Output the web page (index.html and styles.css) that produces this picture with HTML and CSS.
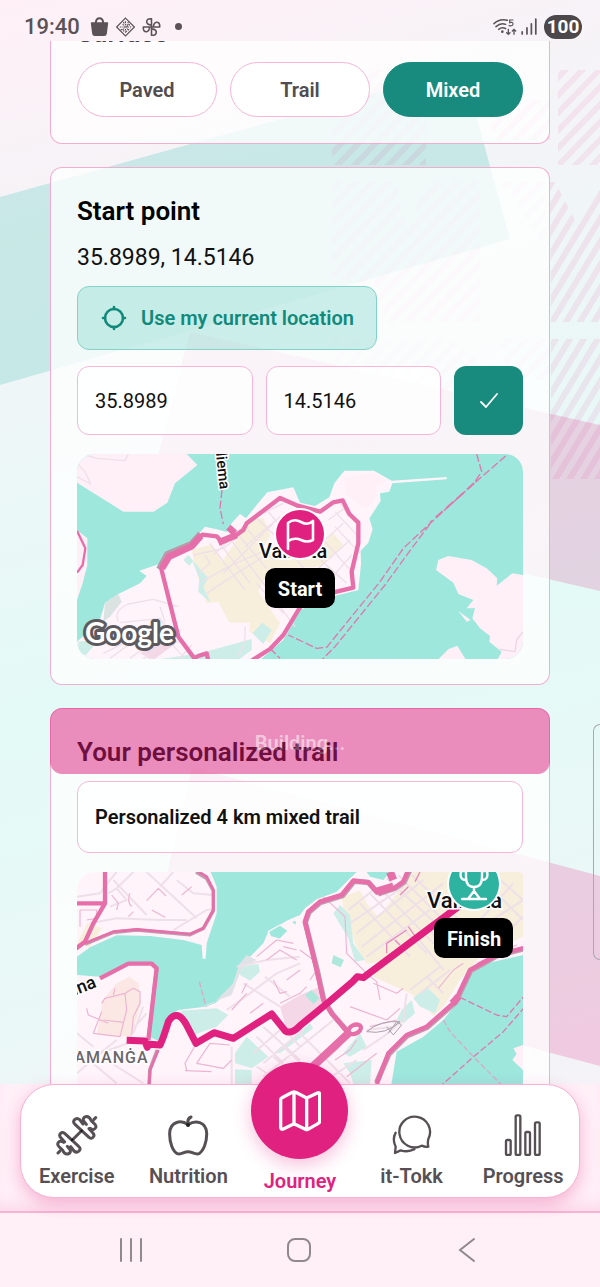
FILE: index.html
```html
<!DOCTYPE html>
<html lang="en">
<head>
<meta charset="utf-8">
<meta name="viewport" content="width=device-width, initial-scale=1">
<title>Journey</title>
<link rel="stylesheet" href="styles.css">
</head>
<body>
<div class="screen">
  <svg class="backdrop" viewBox="0 0 600 1287" preserveAspectRatio="none" aria-hidden="true">
    <defs>
      <pattern id="diag" width="17" height="17" patternUnits="userSpaceOnUse" patternTransform="skewX(-44)"><rect width="8" height="17" fill="#e0218a"/></pattern>
      <pattern id="steep" width="14" height="17" patternUnits="userSpaceOnUse" patternTransform="skewX(-31)"><rect width="7" height="17" fill="#e0218a"/></pattern>
    </defs>
    <path d="M0 197 463 68 510 239 0 385Z" fill="#9fdcd6" fill-opacity=".52"/>
    <path d="M190 332 600 425V591L150 487Z" fill="#e388b7" fill-opacity=".34"/>
    <path d="M192 767 600 876V1066L150 946Z" fill="#ea86b8" fill-opacity=".37"/>
    <g fill="url(#diag)" fill-opacity=".08">
      <path d="M332 70H426V165H332ZM492 100H550V140H492ZM558 70H600V165H558ZM332 182H395L408 232 425 182H480V322H385L375 285 332 278Z"/>
      <path d="M332 339H450L480 362V400H332ZM332 440H376V450H332ZM500 182H545V250L515 200ZM498 339H550V380H510Z" fill-opacity=".06"/>
    </g>
    <path d="M550 182H555L576 222 600 182V322H551ZM551 339H600V479H551Z" fill="url(#steep)" fill-opacity=".09"/>
  </svg>

  <header class="status">
    <time class="clock">19:40</time>
    <svg class="glyph" viewBox="0 0 54 60" aria-hidden="true"><path d="M3 16H13Q15 1 27 1T41 16H51Q53 16 53 19L49 50Q48 57 41 57H13Q6 57 5 50L1 19Q1 16 3 16ZM19 16H35Q34 7 27 7T19 16Z" fill="#5a5256" fill-rule="evenodd"/></svg>
    <svg class="glyph" viewBox="0 0 60 60" aria-hidden="true"><g fill="none" stroke="#5a5256" stroke-width="3.5"><path d="M30 2 58 30 30 58 2 30Z"/><path d="M30 12v12M30 36v12M12 30h12M36 30h12M21 21l8 8M39 21l-8 8M21 39l8-8M39 39l-8-8M23 15l14 14M15 37l14 8M37 14l8 14M31 45l14-10" stroke-dasharray="5 3"/></g></svg>
    <svg class="glyph" viewBox="0 0 60 60" aria-hidden="true"><g fill="none" stroke="#5a5256" stroke-width="5" stroke-linejoin="round"><path id="petal" d="M30 30V4Q14 3 15 15 17 23 30 24"/><use href="#petal" transform="rotate(90 30 30)"/><use href="#petal" transform="rotate(180 30 30)"/><use href="#petal" transform="rotate(270 30 30)"/></g></svg>
    <span class="dot"></span>
    <span class="spacer"></span>
    <svg class="wifi" viewBox="0 0 72 54" aria-hidden="true"><g fill="none" stroke="#5a5256" stroke-width="4.5" stroke-linecap="round"><path d="M3 17Q20 1 43 7M9 26Q23 13 38 19M17 34Q27 25 38 32"/><path d="M46 34V49M41 44l5 5 5-5M63 49V34M58 39l5-5 5 5" stroke-width="4"/><path d="M60 6H50V14Q60 11 60 18T48 23" stroke-width="3.5"/></g><circle cx="28" cy="41" r="4" fill="#5a5256"/></svg>
    <svg class="bars" viewBox="0 0 46 50" aria-hidden="true"><path d="M3 41V47M17 29V47M30 17V47M43 3V47" stroke="#5a5256" stroke-width="5" stroke-linecap="round"/></svg>
    <span class="battery">100</span>
  </header>

  <main class="scroll">
    <section class="card surface">
      <h2>Surface</h2>
      <div class="pills">
        <button class="pill">Paved</button>
        <button class="pill">Trail</button>
        <button class="pill selected" aria-pressed="true">Mixed</button>
      </div>
    </section>

    <section class="card">
      <h2>Start point</h2>
      <p class="coords">35.8989, 14.5146</p>
      <button class="locate">
        <svg viewBox="0 0 26 26" aria-hidden="true"><g fill="none" stroke="#128a7b" stroke-width="2.6" stroke-linecap="round"><circle cx="13" cy="13" r="9"/><path d="M13 2V4M13 22V24M2 13H4M22 13H24"/></g></svg>
        Use my current location
      </button>
      <form class="fields" onsubmit="return false">
        <input type="text" aria-label="Latitude" value="35.8989">
        <input type="text" aria-label="Longitude" value="14.5146">
        <button class="confirm" aria-label="Set start point"><svg viewBox="0 0 20 18" aria-hidden="true"><path d="M2 10 7 15 18 2" fill="none" stroke="#fff" stroke-width="1.8" stroke-linecap="round" stroke-linejoin="round"/></svg></button>
      </form>

      <svg class="map map-start" viewBox="0 0 446 205" preserveAspectRatio="xMidYMid slice" role="img" aria-label="Map of the start point">
        <rect width="446" height="205" fill="#9de7dd"/>
        <g transform="scale(.33333) translate(-81 -42)" stroke-linejoin="round">
          <g fill="#fff0f7">
            <path d="M81 42H410L442 75 375 130 352 188 311 215H220L81 128Z"/>
            <path d="M81 270 112 295V375L98 430 81 480Z"/>
            <path d="M81 660V605L148 545 165 488 205 462 240 445 270 430 290 408 268 392 328 372 350 335 425 305 465 260 500 268 530 276 545 250 570 222 588 235 620 195 652 157 730 142 750 188 795 198 838 172 853 130 883 92H972L1025 122 1190 111V118L1027 130 1018 155 990 160 992 183 958 235 968 268 955 308 932 332 933 372 925 450 855 468 750 510 700 600 630 660Z" fill="#fff4fa"/>
            <path d="M1158 390 1165 360 1195 348 1265 360 1310 385 1342 415 1340 437 1387 400 1419 405V660H1342L1355 635 1318 605 1320 588 1290 565 1267 535 1275 505H1250L1270 480 1225 462 1210 428ZM1225 513 1262 540 1250 545ZM1163 660 1195 628 1222 617 1248 660Z"/>
            <path d="M885 115 972 98 1010 122 980 140 975 175 948 205 890 165Z"/>
          </g>
          <path d="M425 330 485 312 515 365 560 300 600 240 640 233 662 285 640 320 700 360 790 345 850 280 880 315 810 380 660 385 625 455 690 550 660 610 598 575 600 548 538 548 505 485 470 490 440 400Z" fill="#f7efdc"/>
          <g fill="#cdeee8"><path d="M400 360 415 345 430 362 418 378ZM425 358 475 415 460 440 482 488 445 455 448 415ZM607 580 637 548 665 570 640 612ZM310 660 450 640 605 597V630L565 660ZM85 605 148 598 108 645 85 640Z"/></g>
          <path d="M270 640 325 610 375 612 310 660Z" fill="#f4d8e8"/>
          <path d="M160 545 165 488 205 462 215 485 180 530Z" fill="#dbe2e2"/>
          <g fill="none" stroke="#efdfe9" stroke-width="4">
            <path d="M81 70 105 95 122 132 81 110M95 42 140 55 225 62 235 42"/>
            <path d="M205 545Q190 510 235 492L310 478 385 500M210 548 330 535 375 600M180 655 270 590 410 610M240 655 370 560M275 660 395 570M205 560 250 600 300 660M330 500 345 545M160 640 240 600M345 590 400 650M385 660 425 615"/>
            <path d="M430 345 520 325 560 295M445 400 480 370 465 345M455 425 545 375 650 330M480 310 520 365 585 450M510 310 600 430M540 295 620 405 680 480M565 285 650 385M590 265 670 360M620 235 700 310 790 420M650 210 720 290M520 400 590 330 670 250M470 460 560 400 640 350M585 320 690 230M490 345 600 240 700 190M620 430 700 520M690 500 735 560M560 650Q590 620 585 560M855 260 930 340M820 300 910 400M790 340 890 430M800 390 900 300M830 430 905 345M770 350 880 250M835 240 890 200M870 190 895 225M855 215 925 290"/>
          </g>
          <path d="M81 272 106 325 98 375 81 398" fill="none" stroke="#e66faa" stroke-width="7"/>
          <path d="M328 388 352 343 425 312 452 282" fill="none" stroke="#b99aa9" stroke-width="20"/>
          <path d="M475 662 470 640 445 648 433 655 385 590 334 387 356 347 425 319 457 284 500 289 515 305 550 292 580 270 590 250 690 174 740 196 810 215 850 187 878 181 898 222 925 248V310L905 395 910 443 850 457 770 475 745 510 700 585 660 627 605 662" fill="none" stroke="#e66faa" stroke-width="13"/>
          <path d="M336 385 357 350 425 319 452 288M505 308 560 285M535 262 555 280" fill="none" stroke="#e66faa" stroke-width="20"/>
          <g fill="none" stroke="#df78ac" stroke-width="4" stroke-dasharray="24 8">
            <path d="M516 150 510 205 520 252M1367 48 1270 132 1160 232 1060 325 990 425 830 622 800 625 715 585M1280 42 1295 95 1270 132M1140 252 1085 325 1005 435 855 620 815 660M660 625 690 655"/>
          </g>
          <path d="M1272 130 1140 248" fill="none" stroke="#df78ac" stroke-width="6" stroke-dasharray="28 14"/>
          <path d="M1419 575 1400 600 1395 635 1350 628" fill="none" stroke="#ecd5e3" stroke-width="4"/>
        </g>
        <text class="map-label" font-size="15" transform="translate(138 -10) rotate(84)">Sliema</text>
        <text class="map-label" x="182" y="104" font-size="20">Valletta</text>
        <text class="google" x="8" y="189" font-size="28">Google</text>
        <circle cx="223" cy="80" r="26" fill="#fff"/><circle cx="223" cy="80" r="24" fill="#e0217f"/>
        <path d="M211 95V69Q217 64 224 68T236 67V86Q230 89 224 86T211 87" fill="none" stroke="#fff" stroke-width="2.6" stroke-linecap="round" stroke-linejoin="round"/>
        <rect x="188" y="114" width="70" height="40" rx="10"/>
        <text class="pin-label" x="223" y="142" font-size="20">Start</text>
      </svg>
    </section>

    <section class="card trail">
      <button class="build" disabled>Building...</button>
      <h2>Your personalized trail</h2>
      <p class="summary">Personalized 4 km mixed trail</p>
      <svg class="map map-trail" viewBox="0 0 446 240" preserveAspectRatio="xMidYMin slice" role="img" aria-label="Map of the personalized trail">
        <rect width="446" height="240" fill="#fff4fa"/>
        <g transform="scale(.33333) translate(-81 -36)" stroke-linejoin="round">
          <path d="M482 36H920L895 60 860 95 800 118 765 145 750 165 710 182 655 215 640 250 600 290 570 310 550 370 520 410 495 430 465 440 385 450 355 470 330 545 298 530 320 330 300 310H235L150 350 81 345V290L120 262 200 226 300 228 400 240 455 255 458 296H467L470 250 500 160V80ZM950 36H1020L1000 60 960 50ZM1419 285 1310 310 1250 350 1220 430 1180 480 1120 530 1040 575 1010 760H1419Z" fill="#9de7dd"/>
          <path d="M655 215 690 195 715 212 690 238 662 230ZM722 185 740 180 738 198Z" fill="#9de7dd" stroke="#fff4fa" stroke-width="4"/>
          <path d="M1419 555 1390 565 1400 582 1387 600 1419 630Z" fill="#fff0f7"/>
          <path d="M875 112 930 92 950 130 985 172 1090 36H1419V230L1290 290 1230 360 1180 440 1150 468 1120 430 1080 400 970 350 990 305 950 312 915 250 900 200 880 150ZM81 252 112 188 155 205 120 262Z" fill="#f7efdc"/>
          <path d="M140 525 158 420 200 370 238 350 265 370 273 430 245 530Z" fill="#fbe8e4"/>
          <path d="M690 440 750 405 810 380 830 430 750 490 710 510Z" fill="#f4d8e8"/>
          <g fill="#cdeee8"><path d="M390 452 500 445 535 465 500 500 430 525 415 490ZM565 320 625 312 630 335 600 362 570 345ZM555 580 590 530 655 590 605 625 555 610ZM555 628 605 630V672H555ZM675 575 780 490 790 505 690 580ZM850 160 870 135 900 165 910 250 945 300 915 305 895 235ZM1090 415 1130 380 1170 420 1155 460 1110 440ZM1055 450 1085 420 1095 460 1060 490 1040 480ZM880 610 965 600 960 672H910L900 640ZM880 580 930 520 950 560 900 590Z"/></g>
          <path d="M850 285 882 300 872 322 845 310ZM765 405 785 390 808 415 790 432Z" fill="#aee8dc"/>
          <path d="M440 445 490 430 550 370 570 310 590 285 620 300 575 325 545 405Z" fill="#dfe2e6"/>
          <g fill="none" stroke="#efdfe9" stroke-width="6">
            <path d="M81 110 150 100 180 60 200 36M175 100 200 85 250 36M190 60 290 165M200 85 230 120 180 140M290 36 440 175M330 80 370 36M120 190 200 175 330 180 410 180M370 210 470 150 490 148M380 60 430 100 490 105M560 320 650 300 750 290M530 450 600 400 680 340 750 310M580 370 690 440M645 350 720 410M660 460 750 560M620 530 700 610M640 500 750 600M610 580 690 510M640 610 760 510M81 570 200 670M81 640 150 580 260 540M150 580 200 540M170 600 280 670M81 520 130 560M255 500 290 460M250 520 280 440M545 560V672M620 620 700 672M670 590 780 680M700 560 830 680M750 520 900 670M640 650 850 480M740 670 870 560M800 680 920 600"/>
            <path d="M930 130 1080 290M960 100 1130 280M985 80 1160 260M1010 55 1190 220M1045 45 1220 220M1085 45 1250 200M900 190 1060 80M920 220 1120 60M935 260 1180 70M950 290 1220 90M895 150 970 90M1100 230 1180 330M1140 210 1200 290M1180 180 1250 280M1290 50 1419 180M1340 50 1419 120M1250 230 1419 120M1080 390 1170 320M1110 400 1200 330M1130 350 1180 400M1350 240 1419 170M1290 180 1390 70M1070 400 1060 480 1030 500 950 510M940 570 1000 530 1060 480"/>
          </g>
          <g fill="none" stroke="#edb5d2" stroke-width="3.5">
            <path d="M185 105 205 130 200 150M240 100Q230 125 245 140M290 122 325 85 348 108M395 105 425 80M305 150 345 172M235 170 250 155M90 150H140V175L110 180M90 150V200M155 430 165 415 225 400 250 385 270 395V430L250 470 245 525M225 400 230 450 210 530 130 520 155 455M160 480 220 487M190 405 195 385M110 445 115 465 175 490M620 290 680 240 730 250M650 300 690 270 740 300M700 260 740 270M575 400 590 370M670 360 690 400 710 395M600 460 640 430M690 430 750 400 770 380M710 360 750 330M545 450 590 400M410 630 405 610 445 540M440 610 520 625 545 600M440 610 480 550 540 555M405 632 485 635M750 270 790 300M780 360 800 330"/>
            <path d="M820 110 885 170 890 280 950 340 980 365 990 420M970 370 1040 400 1060 385M1165 385 1210 330 1240 310M1050 445 1010 480 900 440M855 600 900 570 920 540M1280 310 1400 255M890 650 980 580M960 500 1040 480"/>
          </g>
          <path d="M1110 36 1095 65M1075 80 1050 105M1010 280V250L1070 210M1075 200 1100 235 1090 245M1035 240 1050 255M1250 100 1230 80" fill="none" stroke="#e88abb" stroke-width="4"/>
          <path d="M950 515Q990 480 1050 485 1010 525 950 515M1010 500 1030 525 1055 495 1040 485 1015 520" fill="none" stroke="#a9a1ae" stroke-width="3"/>
          <g fill="none" stroke="#bf9eb0" stroke-width="11">
            <path d="M105 252 190 217 260 210 420 224 460 205 490 152V92L470 55 438 36M320 325 295 540M322 570 300 628 297 680"/>
            <path d="M1080 30 1062 67 1035 85 985 102M985 100 955 67 912 64 878 107 812 127 777 157 766 187 802 332 822 422 847 462 900 522M1419 267 1342 287 1262 332 1217 427 1132 502 1072 527 1017 582 980 667" stroke-width="16"/>
          </g>
          <g fill="none" stroke="#e66faa">
            <path d="M165 30V130L130 190 105 245 75 268M75 130H165M150 355 235 311H305L320 325 295 540M980 672 1015 580 1070 525 1130 500 1215 425 1260 330 1340 285 1425 263" stroke-width="13"/>
            <path d="M105 250 190 215 260 208 420 222 460 205 490 150V90L470 50 438 30M325 570 300 630 297 680" stroke-width="8"/>
            <path d="M1075 30 1060 65 1035 83 980 96 955 67 910 62 875 105 810 125 775 155 765 185 800 330 820 420 845 460 895 520" stroke-width="14"/>
            <path d="M980 95 1030 80M1030 60 1020 36M750 655 895 520" stroke-width="24"/>
            <ellipse cx="914" cy="508" rx="20" ry="13" stroke-width="13" transform="rotate(-25 914 508)"/>
            <path d="M1207 430 1225 410" stroke-width="22"/>
          </g>
          <path d="M1230 412 1340 465 1370 470 1425 405M1425 440 1360 515 1265 595 1170 680" fill="none" stroke="#df78ac" stroke-width="4" stroke-dasharray="20 8"/>
          <path d="M1180 480 1200 515 1270 590 1360 680M448 365 468 440" fill="none" stroke="#dba9c6" stroke-width="4" stroke-dasharray="18 7"/>
          <path d="M230 541 285 543 292 562 290 552 330 555Q338 540 355 485 380 445 408 492L438 550 492 518 550 535 665 462 705 512Q722 525 750 497L835 427 908 365 922 350 940 353 1225 140 1280 90" fill="none" stroke="#e0217f" stroke-width="21"/>
        </g>
        <text class="map-label" font-size="18" transform="translate(-32 135) rotate(-21)">Marina</text>
        <text class="map-label district" x="-15" y="191" font-size="16">ĦAMANĠA</text>
        <text class="map-label" x="350" y="36" font-size="22">Valletta</text>
        <circle cx="397" cy="12" r="27" fill="#fff"/><circle cx="397" cy="12" r="25" fill="#2db3a0"/>
        <path d="M389 -8H405V5Q405 15 397 15T389 5ZM389 -1H384Q382 8 389 8M405 -1H410Q412 8 405 8M397 15V19L391 27M397 19 403 27M385 27H409" fill="none" stroke="#fff" stroke-width="2.4" stroke-linecap="round" stroke-linejoin="round"/>
        <rect x="357" y="46" width="79" height="40" rx="10"/>
        <text class="pin-label" x="397" y="74" font-size="20">Finish</text>
      </svg>
    </section>
  </main>

  <nav class="dock" aria-label="Main">
    <div class="tabs">
      <a class="tab" href="#exercise">
        <svg viewBox="166 188 126 126" aria-hidden="true"><g fill="none" stroke="#565054" stroke-width="9" stroke-linecap="round" stroke-linejoin="round"><path id="plate" d="M247 218 237 205Q229 198 222 205T223 219L265 258Q273 264 278 257T275 243L265 232M268 231Q280 239 285 229 288 222 280 216L271 207Q266 194 255 196 245 200 249 209L257 219M280 204 285 199"/><use href="#plate" transform="rotate(180 228.5 252)"/><path d="M215 266 242 239"/></g><path d="M243 234l4 4-5 5-4-4ZM215 261l4 4-5 5-4-4Z" fill="#111"/></svg>
        <span>Exercise</span>
      </a>
      <a class="tab" href="#nutrition">
        <svg viewBox="502 188 126 126" aria-hidden="true"><path d="M565 220C545 205 512 209 510 245 509 275 520 300 533 307 545 311 552 301 565 301S586 311 598 307C612 298 622 272 621 245 619 210 587 205 565 220C563 208 566 200 574 197" fill="none" stroke="#565054" stroke-width="9" stroke-linecap="round" stroke-linejoin="round"/><circle cx="565" cy="221" r="6" fill="#222"/></svg>
        <span>Nutrition</span>
      </a>
      <a class="tab active" href="#journey" aria-current="page">
        <span class="bubble"><svg viewBox="837 118 126 126" aria-hidden="true"><path d="M842 147Q842 143 846 141L877 125Q882 122 887 125L920 142 952 127Q959 124 959 132V211Q959 216 955 218L924 236Q920 238 916 236L882 219 850 235Q842 238 842 229ZM882 125V219M920 142V236" fill="none" stroke="#fff" stroke-width="10" stroke-linejoin="round"/></svg></span>
        <span>Journey</span>
      </a>
      <a class="tab" href="#tokk">
        <svg viewBox="274 188 126 126" aria-hidden="true"><path d="M386 263A46 46 0 1 0 366 283Q377 288 386 286 383 277 386 263M288 244Q277 264 288 286L286 305 303 297Q325 304 344 294" fill="none" stroke="#565054" stroke-width="7" stroke-linecap="round" stroke-linejoin="round"/></svg>
        <span>it-Tokk</span>
      </a>
      <a class="tab" href="#progress">
        <svg viewBox="608 188 126 126" aria-hidden="true"><g fill="none" stroke="#565054" stroke-width="7"><rect x="620" y="266" width="14" height="45" rx="4"/><rect x="649" y="192" width="14" height="119" rx="4"/><rect x="678" y="242" width="14" height="69" rx="4"/><rect x="707" y="213" width="14" height="98" rx="4"/></g></svg>
        <span>Progress</span>
      </a>
    </div>
  </nav>

  <footer class="system">
    <button aria-label="Recent apps"><svg viewBox="0 0 28 28" aria-hidden="true"><path d="M4 3V25M14 3V25M24 3V25"/></svg></button>
    <button aria-label="Home"><svg viewBox="0 0 28 28" aria-hidden="true"><rect x="3" y="3" width="22" height="22" rx="7"/></svg></button>
    <button aria-label="Back"><svg viewBox="0 0 28 28" aria-hidden="true"><path d="M21 3 7 14 21 25"/></svg></button>
  </footer>
  <div class="edge-handle"></div>
</div>
</body>
</html>
```
FILE: styles.css
```css
* { box-sizing: border-box; }

body {
  margin: 0;
  font-family: Roboto, "Noto Sans", sans-serif;
  color: #111;
}

button, input {
  font: inherit;
  color: inherit;
  margin: 0;
}

h2, p { margin: 0; }

.screen {
  position: relative;
  isolation: isolate;
  display: flex;
  flex-direction: column;
  height: 100vh;
  overflow: hidden;
  background: linear-gradient(165deg, #fff0f7 0%, #f4f4f7 17%, #e3faf7 50%, #e9f8f7 70%, #f8f1f7 90%);
}

.backdrop {
  position: absolute;
  inset: 0;
  z-index: -1;
  width: 100%;
  height: 100%;
}

/* Status bar */
.status {
  flex: none;
  display: flex;
  align-items: center;
  gap: 7px;
  height: 41px;
  padding: 12px 18px 0 24px;
  color: #5a5256;
}

.clock {
  font-size: 22px;
  font-weight: 500;
  margin-right: 3px;
}

.glyph {
  width: 19px;
  height: 20px;
}

.dot {
  width: 7px;
  height: 7px;
  margin-left: 7px;
  border-radius: 50%;
  background: #5a5256;
}

.spacer { flex: 1; }

.wifi {
  width: 24px;
  height: 18px;
  margin-right: -3px;
}

.bars {
  width: 16px;
  height: 17px;
}

.battery {
  width: 38px;
  border-radius: 12px;
  background: #4b474b;
  color: #fff;
  font-size: 19px;
  font-weight: 700;
  line-height: 24px;
  text-align: center;
}

/* Scrolling content */
.scroll {
  flex: 1;
  min-height: 0;
  overflow: hidden;
  display: flex;
  flex-direction: column;
  gap: 23px;
  padding: 0 50px;
}

.card {
  position: relative;
  flex: none;
  padding: 26px 26px 25px;
  border: 1px solid rgba(240, 140, 188, 0.7);
  border-radius: 12px;
  background: rgba(255, 255, 255, 0.76);
}

.card h2 {
  font-size: 26px;
  font-weight: 600;
  line-height: 35px;
  color: #000;
}

/* Scrolled so that only the foot of the card is in view */
.surface {
  margin-top: -52px;
  padding-bottom: 26px;
}

.surface h2 { color: #444; }

.pills {
  display: flex;
  gap: 13px;
  margin-top: 11px;
}

.pill {
  flex: 1;
  height: 55px;
  border: 1px solid #f7b6d6;
  border-radius: 28px;
  background: #fff;
  color: #514c50;
  font-size: 20px;
  font-weight: 600;
}

.pill.selected {
  border-color: #188b7e;
  background: #188b7e;
  color: #fff;
}

.coords {
  margin-top: 13px;
  font-size: 23px;
  line-height: 31px;
}

.locate {
  display: flex;
  align-items: center;
  gap: 14px;
  height: 64px;
  margin-top: 13px;
  padding: 0 22px 0 23px;
  border: 1px solid #84d3c8;
  border-radius: 12px;
  background: rgba(125, 214, 202, 0.38);
  color: #128a7b;
  font-size: 20px;
  font-weight: 600;
}

.locate svg {
  width: 26px;
  height: 26px;
}

.fields {
  display: flex;
  gap: 13px;
  margin-top: 16px;
}

.fields input {
  flex: 1;
  min-width: 0;
  height: 69px;
  padding: 0 17px;
  border: 1px solid #f7b6d6;
  border-radius: 12px;
  background: rgba(255, 255, 255, 0.8);
  font-size: 20px;
}

.confirm {
  display: grid;
  place-items: center;
  width: 69px;
  height: 69px;
  padding: 0;
  border: 0;
  border-radius: 12px;
  background: #188b7e;
}

.confirm svg {
  width: 20px;
  height: 18px;
}

.map {
  display: block;
  width: 100%;
  margin-top: 19px;
  overflow: hidden;
}

.map-start { border-radius: 18px; }
.map-trail { border-radius: 18px 4px 0 0; }

.map-label {
  fill: #111;
  stroke: #fff;
  stroke-width: 3px;
  paint-order: stroke;
  font-weight: 500;
}

.district {
  fill: #6a666b;
  letter-spacing: 1px;
}

.google {
  fill: #fff;
  stroke: #5d5a5f;
  stroke-width: 6px;
  stroke-linejoin: round;
  paint-order: stroke;
  font-family: Lato, sans-serif;
  font-weight: 700;
}

.pin-label {
  fill: #fff;
  font-weight: 700;
  text-anchor: middle;
}

/* The pending action lies over the top of its card */
.build {
  position: absolute;
  inset: -1px -1px auto;
  height: 66px;
  padding: 4px 0 0;
  border: 1px solid #e0217f;
  border-radius: 12px;
  background: #dc1f7d;
  color: #ee94c1;
  font-size: 20px;
  font-weight: 600;
  opacity: 0.5;
}

.summary {
  margin-top: 11px;
  padding: 0 17px;
  border: 1px solid #f7b6d6;
  border-radius: 12px;
  background: rgba(255, 255, 255, 0.8);
  font-size: 20px;
  font-weight: 600;
  line-height: 70px;
}

/* Bottom navigation */
.dock {
  position: relative;
  flex: none;
  padding: 0 20px 13px;
  border-bottom: 2px solid #f8b2d2;
  background: #ffeff7;
  box-shadow: inset 0 -14px 14px -8px #fbd9e9;
}

.tabs {
  display: grid;
  grid-template-columns: repeat(5, 1fr);
  grid-template-rows: 112px;
  border: 1px solid #f8b2d2;
  border-radius: 34px;
  background: #fff;
  box-shadow: 0 6px 16px rgba(226, 60, 140, 0.32);
}

.tab {
  display: flex;
  flex-direction: column;
  align-items: center;
  justify-content: flex-end;
  gap: 8px;
  padding-bottom: 9px;
  color: #565054;
  font-size: 20px;
  font-weight: 600;
  line-height: 24px;
  text-decoration: none;
}

.tab svg {
  flex: none;
  width: 42px;
  height: 42px;
}

.tab.active {
  padding-bottom: 4px;
  gap: 10px;
  color: #e0217f;
}

.bubble {
  flex: none;
  display: grid;
  place-items: center;
  width: 97px;
  height: 97px;
  border-radius: 50%;
  background: #e0217f;
  box-shadow: 0 6px 18px rgba(224, 33, 127, 0.28);
}

/* System navigation */
.system {
  flex: none;
  display: grid;
  grid-template-columns: repeat(3, 1fr);
  align-items: center;
  height: 74px;
  padding: 0 49px 0 47px;
  background: #fff0f7;
}

.system button {
  display: grid;
  place-items: center;
  padding: 8px;
  border: 0;
  background: none;
}

.system svg {
  width: 28px;
  height: 28px;
  fill: none;
  stroke: #8f898e;
  stroke-width: 2;
  stroke-linecap: round;
}

.edge-handle {
  position: absolute;
  top: 724px;
  right: 0;
  width: 7px;
  height: 236px;
  border: 1px solid #a9a9af;
  border-right: 0;
  border-radius: 7px 0 0 7px;
}
```
